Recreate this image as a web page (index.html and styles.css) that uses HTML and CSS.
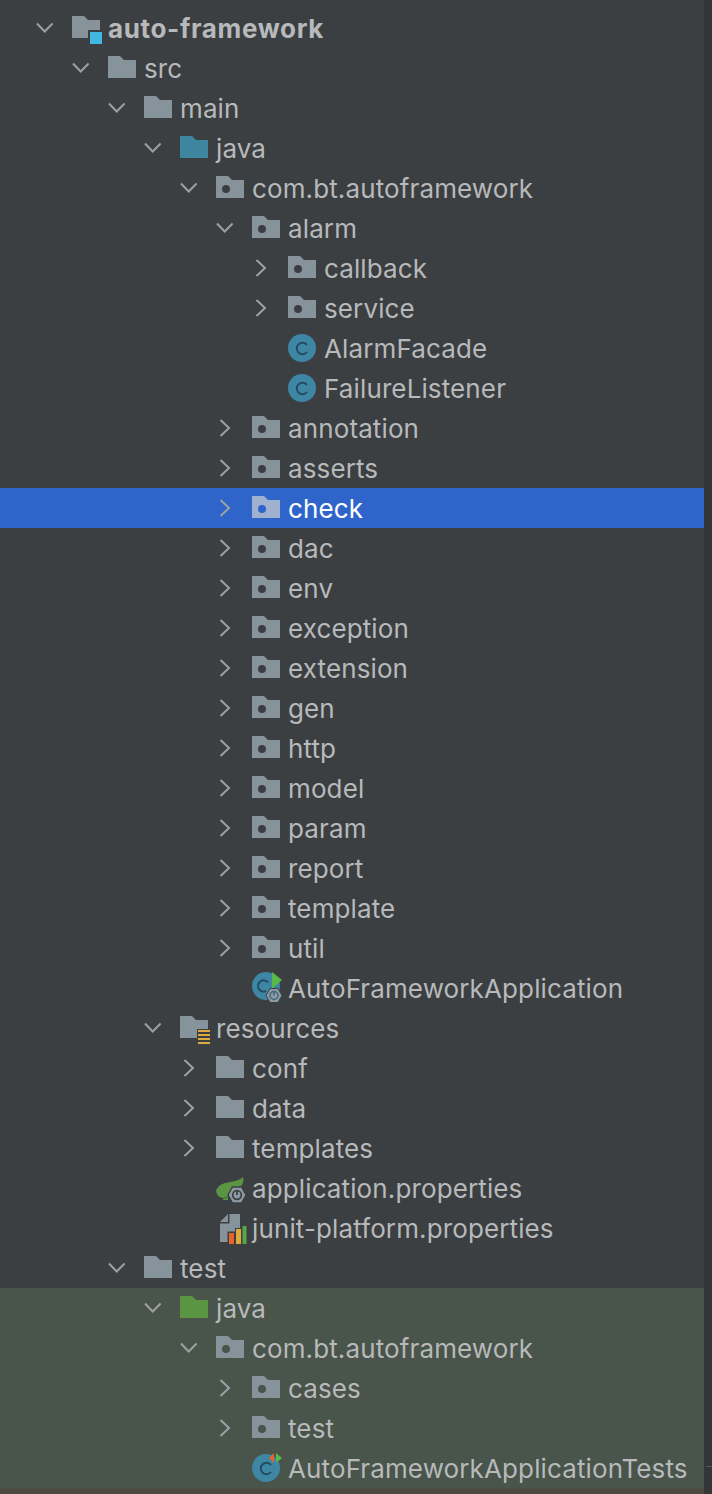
FILE: index.html
```html
<!DOCTYPE html>
<html lang="en">
<head>
<meta charset="utf-8">
<title>Project tree</title>
<link rel="stylesheet" href="styles.css">
</head>
<body>
<svg class="defs" width="0" height="0" aria-hidden="true">
  <symbol id="down" viewBox="0 0 18 18"><path d="M1 4.5 8.7 12.5 16.6 4.5" fill="none" stroke="#9ea1a3" stroke-width="2"/></symbol>
  <symbol id="right" viewBox="0 0 18 18"><path d="M4.5 1 13 9 4.5 17" fill="none" stroke="#9ea1a3" stroke-width="2"/></symbol>
  <symbol id="folder" viewBox="0 0 28 22"><path d="M0 0H12L16 4H28V22H0Z" fill="#87939a"/></symbol>
  <symbol id="src-blue" viewBox="0 0 28 22"><path d="M0 0H12L16 4H28V22H0Z" fill="#3e86a0"/></symbol>
  <symbol id="src-green" viewBox="0 0 28 22"><path d="M0 0H12L16 4H28V22H0Z" fill="#5a9544"/></symbol>
  <symbol id="pkg" viewBox="0 0 28 22"><path d="M0 0H12L16 4H28V22H0Z" fill="#87939a"/><circle cx="10" cy="13" r="4" fill="#3c3f41"/></symbol>
  <symbol id="pkg-t" viewBox="0 0 28 22"><path d="M0 0H12L16 4H28V22H0Z" fill="#87939a"/><circle cx="10" cy="13" r="4" fill="#49544a"/></symbol>
  <symbol id="pkg-sel" viewBox="0 0 28 22"><path d="M0 0H12L16 4H28V22H0Z" fill="#9fb1cf"/><circle cx="10" cy="13" r="4" fill="#2f65ca"/></symbol>
  <symbol id="module" viewBox="0 0 32 30"><path d="M0 0H12L16 4H28V22H0Z" fill="#87939a"/><path d="M17 15H31V29H17Z" fill="#40b6e0" stroke="#3c3f41" stroke-width="2"/></symbol>
  <symbol id="res" viewBox="0 0 32 30"><path d="M0 0H12L16 4H28V22H0Z" fill="#87939a"/><path d="M17 13H31V29H17Z" fill="#3c3f41"/><path d="M18 15H30M18 19H30M18 23H30M18 27H30" stroke="#e0a93f" stroke-width="2"/></symbol>
  <symbol id="cls" viewBox="0 0 28 28"><circle cx="14" cy="14" r="14" fill="#3e86a4"/><path d="M19 11A5.7 5.7 0 1 0 19 18" fill="none" stroke="#214d63" stroke-width="2"/></symbol>
  <symbol id="app" viewBox="0 0 32 32"><circle cx="14" cy="15" r="14" fill="#3e86a4"/><path d="M16 11.5A5.6 5.6 0 1 0 14 20" fill="none" stroke="#214d63" stroke-width="2"/><path d="M20 1 30 9 20 18Z" fill="#59b84a"/><path d="M14 24.5 18 17.5H26L30 24.5 26 31.5H18Z" fill="#8b9aa3" stroke="#3c3f41"/><circle cx="22" cy="24.5" r="4" fill="none" stroke="#3e6a80" stroke-width="1.5"/><path d="M22 20V24.5" stroke="#3e6a80" stroke-width="1.5"/></symbol>
  <symbol id="spring" viewBox="0 0 32 32"><path d="M0 19C2 12 9 11 14 10 20 9 24 8 27 5 28 9 27 12 25 14L13 24 8 26C4 26 1 24 0 19Z" fill="#5a9544"/><path d="M7 27 12 25V28H7Z" fill="#5a9544"/><path d="M12 23 16.5 15H25.5L30 23 25.5 31H16.5Z" fill="#8b9aa3" stroke="#3c3f41" stroke-width="1.4"/><circle cx="21" cy="23" r="4.3" fill="none" stroke="#3c3f41" stroke-width="1.7"/><path d="M21 18V23" stroke="#3c3f41" stroke-width="1.7"/></symbol>
  <symbol id="junit" viewBox="0 0 28 30"><path d="M9.5 0H20V28H0V9.5H9.5Z" fill="#87939a"/><path d="M0 8 8 0V8Z" fill="#87939a"/><path d="M7.5 17.5H15V19H15V14H21V11H28V30H7.5Z" fill="#3c3f41"/><path d="M9 19H14V30H9Z" fill="#e8622a"/><path d="M16 15H21V30H16Z" fill="#e0a93f"/><path d="M22.5 12H26.5V30H22.5Z" fill="#59a645"/></symbol>
  <symbol id="test-cls" viewBox="0 0 32 32"><circle cx="14" cy="17" r="14" fill="#3e86a4"/><path d="M19 14A5.7 5.7 0 1 0 19 21" fill="none" stroke="#214d63" stroke-width="2"/><path d="M22 2V12L17 7Z" fill="#e8622a"/><path d="M24 2V12L30 7Z" fill="#59b84a"/></symbol>
</svg>
<div class="window">
  <div class="tree">
    <div class="row d0"><svg class="chev"><use href="#down"/></svg><svg class="ic-wide"><use href="#module"/></svg><span class="label bold">auto-framework</span></div>
    <div class="row d1"><svg class="chev"><use href="#down"/></svg><svg class="ic"><use href="#folder"/></svg><span class="label">src</span></div>
    <div class="row d2"><svg class="chev"><use href="#down"/></svg><svg class="ic"><use href="#folder"/></svg><span class="label">main</span></div>
    <div class="row d3"><svg class="chev"><use href="#down"/></svg><svg class="ic"><use href="#src-blue"/></svg><span class="label">java</span></div>
    <div class="row d4"><svg class="chev"><use href="#down"/></svg><svg class="ic"><use href="#pkg"/></svg><span class="label">com.bt.autoframework</span></div>
    <div class="row d5"><svg class="chev"><use href="#down"/></svg><svg class="ic"><use href="#pkg"/></svg><span class="label">alarm</span></div>
    <div class="row d6"><svg class="chev"><use href="#right"/></svg><svg class="ic"><use href="#pkg"/></svg><span class="label">callback</span></div>
    <div class="row d6"><svg class="chev"><use href="#right"/></svg><svg class="ic"><use href="#pkg"/></svg><span class="label">service</span></div>
    <div class="row d6"><span class="chev"></span><svg class="ic-round"><use href="#cls"/></svg><span class="label">AlarmFacade</span></div>
    <div class="row d6"><span class="chev"></span><svg class="ic-round"><use href="#cls"/></svg><span class="label">FailureListener</span></div>
    <div class="row d5"><svg class="chev"><use href="#right"/></svg><svg class="ic"><use href="#pkg"/></svg><span class="label">annotation</span></div>
    <div class="row d5"><svg class="chev"><use href="#right"/></svg><svg class="ic"><use href="#pkg"/></svg><span class="label">asserts</span></div>
    <div class="row d5 selected"><svg class="chev"><use href="#right"/></svg><svg class="ic"><use href="#pkg-sel"/></svg><span class="label">check</span></div>
    <div class="row d5"><svg class="chev"><use href="#right"/></svg><svg class="ic"><use href="#pkg"/></svg><span class="label">dac</span></div>
    <div class="row d5"><svg class="chev"><use href="#right"/></svg><svg class="ic"><use href="#pkg"/></svg><span class="label">env</span></div>
    <div class="row d5"><svg class="chev"><use href="#right"/></svg><svg class="ic"><use href="#pkg"/></svg><span class="label">exception</span></div>
    <div class="row d5"><svg class="chev"><use href="#right"/></svg><svg class="ic"><use href="#pkg"/></svg><span class="label">extension</span></div>
    <div class="row d5"><svg class="chev"><use href="#right"/></svg><svg class="ic"><use href="#pkg"/></svg><span class="label">gen</span></div>
    <div class="row d5"><svg class="chev"><use href="#right"/></svg><svg class="ic"><use href="#pkg"/></svg><span class="label">http</span></div>
    <div class="row d5"><svg class="chev"><use href="#right"/></svg><svg class="ic"><use href="#pkg"/></svg><span class="label">model</span></div>
    <div class="row d5"><svg class="chev"><use href="#right"/></svg><svg class="ic"><use href="#pkg"/></svg><span class="label">param</span></div>
    <div class="row d5"><svg class="chev"><use href="#right"/></svg><svg class="ic"><use href="#pkg"/></svg><span class="label">report</span></div>
    <div class="row d5"><svg class="chev"><use href="#right"/></svg><svg class="ic"><use href="#pkg"/></svg><span class="label">template</span></div>
    <div class="row d5"><svg class="chev"><use href="#right"/></svg><svg class="ic"><use href="#pkg"/></svg><span class="label">util</span></div>
    <div class="row d5"><span class="chev"></span><svg class="ic-app"><use href="#app"/></svg><span class="label">AutoFrameworkApplication</span></div>
    <div class="row d3"><svg class="chev"><use href="#down"/></svg><svg class="ic-wide"><use href="#res"/></svg><span class="label">resources</span></div>
    <div class="row d4"><svg class="chev"><use href="#right"/></svg><svg class="ic"><use href="#folder"/></svg><span class="label">conf</span></div>
    <div class="row d4"><svg class="chev"><use href="#right"/></svg><svg class="ic"><use href="#folder"/></svg><span class="label">data</span></div>
    <div class="row d4"><svg class="chev"><use href="#right"/></svg><svg class="ic"><use href="#folder"/></svg><span class="label">templates</span></div>
    <div class="row d4"><span class="chev"></span><svg class="ic-spring"><use href="#spring"/></svg><span class="label">application.properties</span></div>
    <div class="row d4"><span class="chev"></span><svg class="ic-junit"><use href="#junit"/></svg><span class="label">junit-platform.properties</span></div>
    <div class="row d2"><svg class="chev"><use href="#down"/></svg><svg class="ic"><use href="#folder"/></svg><span class="label">test</span></div>
    <div class="test-group">
      <div class="row d3"><svg class="chev"><use href="#down"/></svg><svg class="ic"><use href="#src-green"/></svg><span class="label">java</span></div>
      <div class="row d4"><svg class="chev"><use href="#down"/></svg><svg class="ic"><use href="#pkg-t"/></svg><span class="label">com.bt.autoframework</span></div>
      <div class="row d5"><svg class="chev"><use href="#right"/></svg><svg class="ic"><use href="#pkg-t"/></svg><span class="label">cases</span></div>
      <div class="row d5"><svg class="chev"><use href="#right"/></svg><svg class="ic"><use href="#pkg-t"/></svg><span class="label">test</span></div>
      <div class="row d5"><span class="chev"></span><svg class="ic-app"><use href="#test-cls"/></svg><span class="label">AutoFrameworkApplicationTests</span></div>
    </div>
    <div class="bottom-strip"></div>
  </div>
  <div class="scrollbar"><span class="tick"></span></div>
</div>
</body>
</html>
```
FILE: styles.css
```css
* { box-sizing: border-box; }
html, body { margin: 0; height: 100%; }
body {
  background: #3c3f41;
  color: #b7b9bb;
  font-family: Inter, "Liberation Sans", sans-serif;
  font-size: 26px;
  overflow: hidden;
}
.defs { position: absolute; }
.window { display: flex; height: 1494px; }
.tree { flex: 1; min-width: 0; padding-top: 8px; display: flex; flex-direction: column; }
.scrollbar {
  width: 8px;
  background: #333537;
  display: flex;
  flex-direction: column;
  justify-content: flex-end;
  align-items: flex-end;
  padding-bottom: 27px;
}
.tick { width: 6px; height: 1px; background: #55585a; }
.row { height: 40px; flex: none; display: flex; align-items: center; white-space: nowrap; }
.d0 { padding-left: 36px; }
.d1 { padding-left: 72px; }
.d2 { padding-left: 108px; }
.d3 { padding-left: 144px; }
.d4 { padding-left: 180px; }
.d5 { padding-left: 216px; }
.d6 { padding-left: 252px; }
.chev { width: 18px; height: 18px; margin-right: 18px; flex: none; }
.ic { width: 28px; height: 22px; margin-right: 8px; flex: none; margin-top: -2px; }
.ic-wide { width: 32px; height: 30px; margin-right: 4px; flex: none; margin-top: 6px; }
.ic-round { width: 28px; height: 28px; margin-right: 8px; flex: none; }
.ic-app { width: 32px; height: 32px; margin-right: 4px; flex: none; margin-top: -2px; }
.ic-spring { width: 32px; height: 32px; margin-right: 4px; flex: none; }
.ic-junit { width: 28px; height: 30px; margin-left: 4px; margin-right: 4px; flex: none; margin-top: 2px; }
.label { letter-spacing: 0.12px; line-height: 40px; padding-top: 2px; }
.bold { font-weight: 700; letter-spacing: 0.65px; }
.selected { background: #2f65ca; }
.selected .label { color: #fff; }
.test-group { background: #49544a; flex: none; }
.bottom-strip { flex: 1; background: #4d4a42; }
```
